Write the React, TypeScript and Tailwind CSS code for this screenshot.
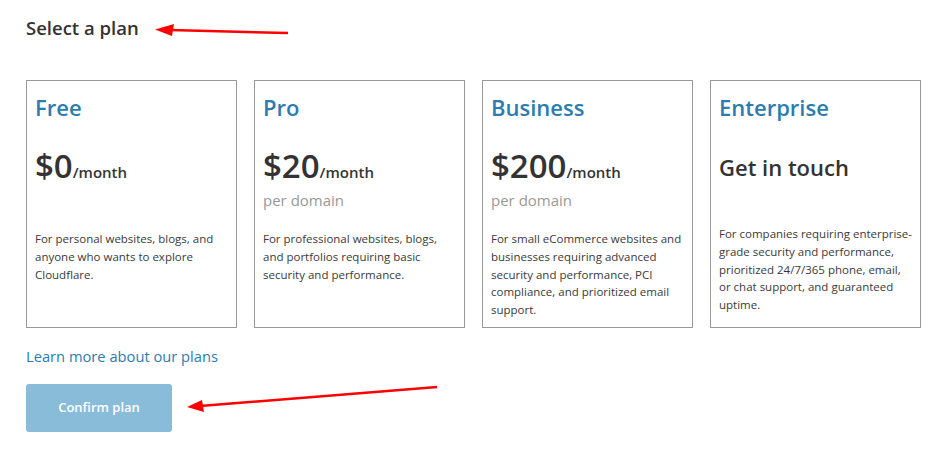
import React from "react";

interface Plan {
  name: string;
  price?: string;
  perDomain?: boolean;
  description: string;
}

const plans: Plan[] = [
  {
    name: "Free",
    price: "$0",
    description:
      "For personal websites, blogs, and anyone who wants to explore Cloudflare.",
  },
  {
    name: "Pro",
    price: "$20",
    perDomain: true,
    description:
      "For professional websites, blogs, and portfolios requiring basic security and performance.",
  },
  {
    name: "Business",
    price: "$200",
    perDomain: true,
    description:
      "For small eCommerce websites and businesses requiring advanced security and performance, PCI compliance, and prioritized email support.",
  },
  {
    name: "Enterprise",
    description:
      "For companies requiring enterprise-grade security and performance, prioritized 24/7/365 phone, email, or chat support, and guaranteed uptime.",
  },
];

const PlanCard: React.FC<{ plan: Plan }> = ({ plan }) => {
  return (
    <div className="w-[211px] border border-[#999] px-[8px] pt-[12px] pb-[8px]">
      <h3 className="text-[22px] leading-[28px] font-semibold text-[#2c7cb0]">
        {plan.name}
      </h3>
      {plan.price ? (
        <div className="h-[109px] pt-[25px]">
          <div className="flex items-baseline text-[#333]">
            <span className="text-[33px] leading-[40px] font-semibold">
              {plan.price}
            </span>
            <span className="text-[15px] font-semibold">/month</span>
          </div>
          {plan.perDomain && (
            <div className="text-[15px] leading-[20px] text-[#999] mt-[4px]">
              per domain
            </div>
          )}
        </div>
      ) : (
        <div className="h-[104px] pt-[32px]">
          <div className="text-[22px] leading-[28px] font-semibold text-[#333]">
            Get in touch
          </div>
        </div>
      )}
      <p className="text-[11.5px] leading-[17.8px] text-[#3a3a3a]">
        {plan.description}
      </p>
    </div>
  );
};

export default function App() {
  return (
    <div
      className="relative w-[949px] h-[458px] bg-white px-[26px] pt-[14px]"
      style={{ fontFamily: '"Open Sans", "Noto Sans", sans-serif' }}
    >
      <h2 className="text-[18.5px] leading-[28px] font-semibold text-[#333]">
        Select a plan
      </h2>
      <div className="mt-[38px] flex gap-[17px]">
        {plans.map((plan) => (
          <PlanCard key={plan.name} plan={plan} />
        ))}
      </div>
      <div className="mt-[16px]">
        <a href="#" className="text-[14.7px] leading-[22px] text-[#2c7cb0]">
          Learn more about our plans
        </a>
      </div>
      <button className="mt-[16px] w-[146px] h-[48px] rounded-[3px] bg-[#88bcd9] text-white text-[13px] font-semibold">
        Confirm plan
      </button>

      <svg
        className="absolute inset-0 pointer-events-none"
        width="949"
        height="458"
        viewBox="0 0 949 458"
      >
        <line x1="288" y1="33" x2="170" y2="30" stroke="#f00" strokeWidth="2.5" />
        <polygon points="155,29.5 174,24 172,36" fill="#f00" />
        <line x1="437" y1="387" x2="200" y2="406" stroke="#f00" strokeWidth="2.5" />
        <polygon points="187,407 202,400 204,412" fill="#f00" />
      </svg>
    </div>
  );
}
